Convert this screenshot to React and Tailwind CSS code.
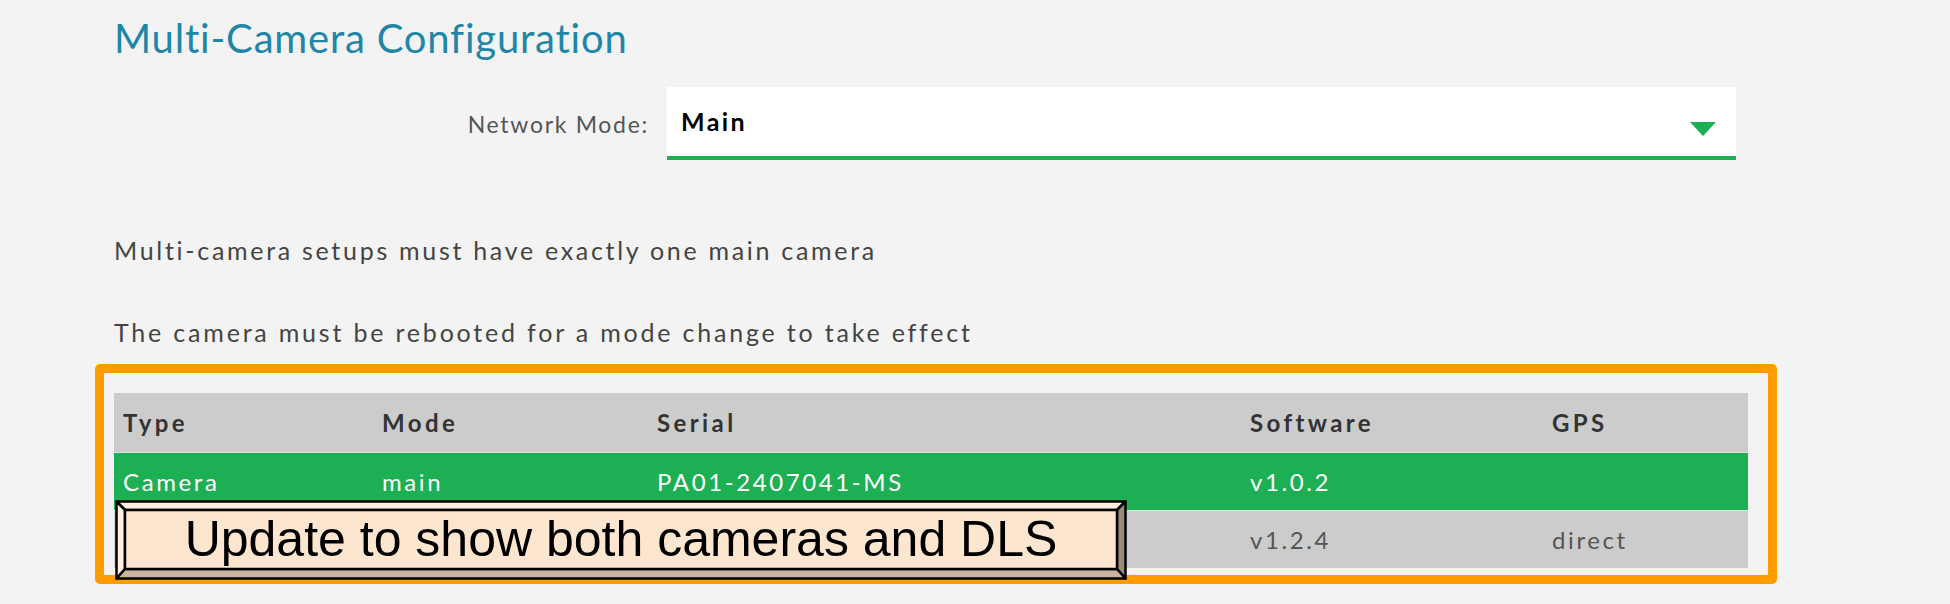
import React from 'react';

const cols = 'grid grid-cols-[259px_275px_593px_302px_205px]';

// second row's first cells sit under the callout, so they stay blank
const rows = [
  { id: 1, type: 'Camera', mode: 'main', serial: 'PA01-2407041-MS', sw: 'v1.0.2', gps: '', active: true },
  { id: 2, type: '', mode: '', serial: '', sw: 'v1.2.4', gps: 'direct', active: false },
];

const Callout = () => (
  <div className="absolute left-[1px] top-[107px] w-[1012px] h-[80px]">
    <svg width="1012" height="80" viewBox="0 0 1012 80" className="absolute inset-0">
      <rect x="1.5" y="1.5" width="1009" height="77" fill="#fde6cf" />
      <polygon points="1.5,1.5 1010.5,1.5 1002,10 10,10" fill="#fff0e2" stroke="#000" strokeWidth="2.5" strokeLinejoin="round" />
      <polygon points="1.5,1.5 10,10 10,69 1.5,78.5" fill="#fff0e2" stroke="#000" strokeWidth="2.5" strokeLinejoin="round" />
      <polygon points="1010.5,1.5 1010.5,78.5 1002,69 1002,10" fill="#9c8a7a" stroke="#000" strokeWidth="2.5" strokeLinejoin="round" />
      <polygon points="1.5,78.5 10,69 1002,69 1010.5,78.5" fill="#c8b4a0" stroke="#000" strokeWidth="2.5" strokeLinejoin="round" />
      <rect x="10" y="10" width="992" height="59" fill="#fde6cf" stroke="#000" strokeWidth="2.5" />
    </svg>
    <div className="relative flex h-full items-center justify-center pb-[2px] font-['Liberation_Sans',Arial,sans-serif] text-[50px] leading-none text-black">
      Update to show both cameras and DLS
    </div>
  </div>
);

export default function App() {
  return (
    <div className="min-h-[604px] w-[1950px] bg-[#f3f3f3] pl-[114px] font-['Lato',sans-serif]">
      <div className="w-[1634px]">
        <h1 className="pt-[18px] text-[40px] leading-[40px] tracking-[0.8px] text-[#1f86a8]">Multi-Camera Configuration</h1>

        <div className="mt-[29px] flex items-start">
          <div className="w-[535px] pt-[23px] text-right text-[23px] leading-[28px] tracking-[1.7px] text-[#555]">Network Mode:</div>
          <div className="ml-[18px] flex h-[73px] w-[1069px] items-center justify-between border-b-[4px] border-[#1daf53] bg-white pl-[14px] pr-[20px]">
            <span className="text-[25px] font-bold leading-none tracking-[2.4px] text-black">Main</span>
            <svg width="26" height="14" viewBox="0 0 26 14" className="mt-[14px]">
              <polygon points="0,0 26,0 13,14" fill="#1daf53" />
            </svg>
          </div>
        </div>

        <p className="mt-[75px] text-[25px] leading-[30px] tracking-[2.7px] text-[#444]">Multi-camera setups must have exactly one main camera</p>
        <p className="mt-[52px] text-[25px] leading-[30px] tracking-[2.8px] text-[#444]">The camera must be rebooted for a mode change to take effect</p>

        <div className="relative mt-[46px]">
          <div className="pointer-events-none absolute left-[-19px] top-[-29px] h-[220px] w-[1682px] rounded-[5px] border-[9px] border-[#ff9c00]" />

          <div className={`${cols} h-[59px] items-center bg-[#cccccc] text-[24px] font-bold tracking-[3.4px] text-[#333]`}>
            <div className="pl-[9px]">Type</div>
            <div className="pl-[9px]">Mode</div>
            <div className="pl-[9px]">Serial</div>
            <div className="pl-[9px]">Software</div>
            <div className="pl-[9px]">GPS</div>
          </div>
          {rows.map((r) => (
            <div
              key={r.id}
              className={`${cols} h-[58px] items-center border-t border-[#e2e2e2] text-[24px] tracking-[2.6px] ${r.active ? 'bg-[#1daf53] text-white' : 'bg-[#cccccc] text-[#555]'}`}
            >
              <div className="pl-[9px]">{r.type}</div>
              <div className="pl-[9px]">{r.mode}</div>
              <div className="pl-[9px]">{r.serial}</div>
              <div className="pl-[9px]">{r.sw}</div>
              <div className="pl-[9px]">{r.gps}</div>
            </div>
          ))}

          <Callout />
        </div>
      </div>
    </div>
  );
}
